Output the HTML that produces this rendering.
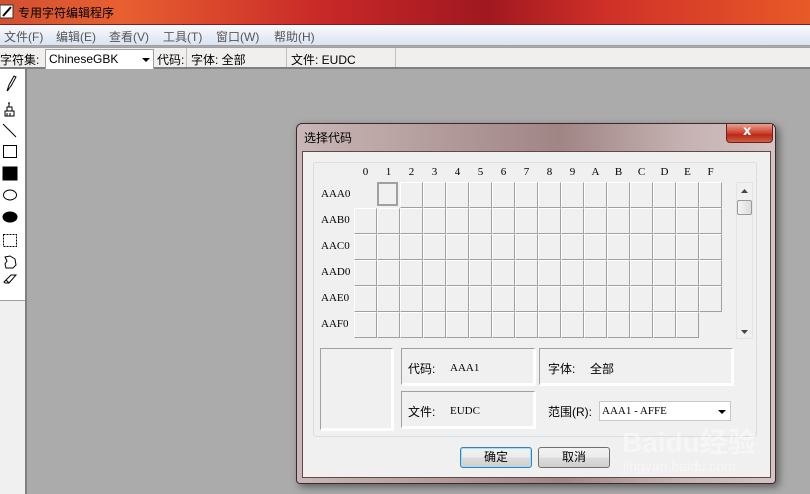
<!DOCTYPE html>
<html><head><meta charset="utf-8"><style>
*{margin:0;padding:0;box-sizing:border-box}
body{width:810px;height:494px;overflow:hidden;position:relative;background:#ababab;font-family:"Liberation Sans","Noto Sans CJK SC",sans-serif;font-size:12px;color:#000}
.a{position:absolute}
#title{left:0;top:0;width:810px;height:25px;background:linear-gradient(90deg,#d05030 0%,#e86030 15%,#c82828 40%,#a01820 60%,#d03028 75%,#e85a28 100%);border-bottom:1px solid #7a2020}
#menu{left:0;top:25px;width:810px;height:21px;background:linear-gradient(#f8fafd,#dbe3f2);border-bottom:1px solid #a0a0a0;color:#555;font-size:12px}
#menu span{position:absolute;top:3px}
#tb{left:0;top:47px;width:810px;height:22px;background:#f1efee;border-top:1px solid #a0a0a0;border-bottom:2px solid #808080}
#tb span{position:absolute;top:3px;font-size:12px}
#tool{left:0;top:69px;width:27px;height:425px;background:#f0f0f0;border-right:2px solid #808080}
.g{display:grid;grid-template-columns:repeat(16,23px);grid-auto-rows:26px}
.g i{display:block;width:23px;height:26px;background:#f0f0f0;border:1px solid;border-color:#fff #a0a0a0 #a0a0a0 #fff}
.g i.n{visibility:hidden}
.g i.s{border:2px solid #a0a0a0;background:#f0f0f0;margin:0 1px 2px 0;width:21px;height:24px}
.mono{font-family:"Liberation Serif","Noto Serif CJK SC",serif;font-size:11px}
.box{border:1px solid #a0a0a0;border-right-color:#fff;border-bottom-color:#fff;box-shadow:inset -1px -1px 0 #fff,1px 1px 0 #fff}
.btn{border:1px solid #707070;border-radius:3px;background:linear-gradient(#f2f2f2,#ebebeb 50%,#dddddd 51%,#cfcfcf);text-align:center;line-height:18px;font-size:12px}
</style></head><body>
<div id="title" class="a">
 <svg class="a" style="left:0;top:4px" width="14" height="16"><rect x="0" y="1" width="13" height="13" fill="#fff" stroke="#333"/><path d="M3 12L11 3" stroke="#000" stroke-width="2"/></svg>
 <span class="a" style="left:18px;top:4px;font-size:12px;color:#000">专用字符编辑程序</span>
</div>
<div id="menu" class="a">
 <span style="left:4px">文件(F)</span><span style="left:56px">编辑(E)</span><span style="left:109px">查看(V)</span><span style="left:163px">工具(T)</span><span style="left:216px">窗口(W)</span><span style="left:274px">帮助(H)</span>
</div>
<div id="tb" class="a">
 <span style="left:0">字符集:</span>
 <div class="a" style="left:45px;top:1px;width:109px;height:20px;background:#fff;border:1px solid #a0a0a0;border-bottom:none"><span style="left:3px;top:2px">ChineseGBK</span><svg class="a" style="left:96px;top:8px" width="8" height="5"><path d="M0 0h8L4 4z"/></svg></div>
 <span style="left:157px">代码:</span>
 <div class="a" style="left:186px;top:0;width:1px;height:19px;background:#c0c0c0"></div>
 <span style="left:191px">字体: 全部</span>
 <div class="a" style="left:286px;top:0;width:1px;height:19px;background:#c0c0c0"></div>
 <span style="left:291px">文件: EUDC</span>
 <div class="a" style="left:395px;top:0;width:1px;height:19px;background:#c0c0c0"></div>
</div>
<div id="tool" class="a">
 <div class="a" style="left:0;top:0;width:25px;height:232px;background:#fff;border-bottom:1px solid #a0a0a0"></div>
 <svg class="a" style="left:0;top:0" width="25" height="230" fill="none" stroke="#000">
  <path d="M7 22l2-6 5-9 2 1-5 9zM7 22l2-2"/>
  <path d="M9 34v4M8 34h2M7 38h5v4H7zM5 42h9v5H5z M7 44v3M10 44v3"/>
  <path d="M3 55l13 13"/>
  <rect x="3.5" y="76.5" width="13" height="12"/>
  <rect x="3" y="98" width="14" height="13" fill="#000"/>
  <ellipse cx="10" cy="126" rx="6.5" ry="5"/>
  <ellipse cx="10" cy="148" rx="7" ry="5" fill="#000"/>
  <rect x="3.5" y="165.5" width="13" height="12" stroke-dasharray="2 1"/>
  <path d="M5 188l5-1 5 3 1 6-3 3H6l-1-4 2-3z"/>
  <path d="M4 213l7-7 5 0-7 8H5zM9 214l-3-3"/>
 </svg>
</div>
<!-- dialog -->
<div class="a" style="left:296px;top:123px;width:480px;height:361px;border-radius:6px 6px 4px 4px;background:linear-gradient(90deg,#c9b6b6,#b39b9b 30%,#a08585 55%,#c4b0b0 80%,#d4c4c4);border:1px solid #3a2a2a;box-shadow:3px 3px 8px rgba(0,0,0,.45)">
 <span class="a" style="left:7px;top:5px;font-size:12px">选择代码</span>
 <div class="a" style="left:429px;top:0;width:47px;height:19px;border:1px solid #6a2020;border-top:none;border-radius:0 0 4px 4px;background:linear-gradient(#e8a090,#d04030 50%,#b82818 60%,#d06040)"><span class="a" style="left:16px;top:0;color:#fff;font-weight:bold;font-size:13px;font-family:'DejaVu Sans',sans-serif">x</span></div>
 <div class="a" style="left:5px;top:27px;width:469px;height:327px;background:#f0f0f0;border:1px solid #5a4a4a"></div>
</div>
<div class="a" style="left:313px;top:162px;width:444px;height:275px;border:1px solid #d5dfe5;border-radius:3px"></div>
<div class="a mono" style="left:354px;top:166px;width:368px;display:grid;grid-template-columns:repeat(16,23px);text-align:center">
<span>0</span><span>1</span><span>2</span><span>3</span><span>4</span><span>5</span><span>6</span><span>7</span><span>8</span><span>9</span><span>A</span><span>B</span><span>C</span><span>D</span><span>E</span><span>F</span></div>
<div class="a mono" style="left:321px;top:181px;line-height:26px">AAA0<br>AAB0<br>AAC0<br>AAD0<br>AAE0<br>AAF0</div>
<div class="a g" style="left:354px;top:182px">
<i class="n"></i><i class="s"></i><i></i><i></i><i></i><i></i><i></i><i></i><i></i><i></i><i></i><i></i><i></i><i></i><i></i><i></i>
<i></i><i></i><i></i><i></i><i></i><i></i><i></i><i></i><i></i><i></i><i></i><i></i><i></i><i></i><i></i><i></i>
<i></i><i></i><i></i><i></i><i></i><i></i><i></i><i></i><i></i><i></i><i></i><i></i><i></i><i></i><i></i><i></i>
<i></i><i></i><i></i><i></i><i></i><i></i><i></i><i></i><i></i><i></i><i></i><i></i><i></i><i></i><i></i><i></i>
<i></i><i></i><i></i><i></i><i></i><i></i><i></i><i></i><i></i><i></i><i></i><i></i><i></i><i></i><i></i><i></i>
<i></i><i></i><i></i><i></i><i></i><i></i><i></i><i></i><i></i><i></i><i></i><i></i><i></i><i></i><i></i><i class="n"></i>
</div>
<div class="a" style="left:736px;top:182px;width:17px;height:157px;background:#f0f0f0;border:1px solid #e4e4e4">
 <svg class="a" style="left:4px;top:6px" width="7" height="4"><path d="M0 4L3.5 0 7 4z" fill="#444"/></svg>
 <div class="a" style="left:0;top:17px;width:15px;height:15px;border:1px solid #999;border-radius:2px;background:linear-gradient(90deg,#f4f4f4,#dcdcdc)"></div>
 <svg class="a" style="left:4px;top:147px" width="7" height="4"><path d="M0 0h7L3.5 4z" fill="#444"/></svg>
</div>
<div class="a box" style="left:320px;top:348px;width:73px;height:82px"></div>
<div class="a box" style="left:401px;top:348px;width:134px;height:37px"><span class="a" style="left:6px;top:11px">代码:</span><span class="a mono" style="left:48px;top:13px">AAA1</span></div>
<div class="a box" style="left:539px;top:348px;width:194px;height:37px"><span class="a" style="left:8px;top:11px">字体:</span><span class="a" style="left:50px;top:11px">全部</span></div>
<div class="a box" style="left:401px;top:391px;width:134px;height:37px"><span class="a" style="left:6px;top:11px">文件:</span><span class="a mono" style="left:48px;top:13px">EUDC</span></div>
<span class="a" style="left:548px;top:403px">范围(R):</span>
<div class="a" style="left:599px;top:401px;width:132px;height:20px;background:#fff;border:1px solid #c8c8c8"><span class="a mono" style="left:2px;top:3px">AAA1 - AFFE</span><svg class="a" style="left:118px;top:8px" width="8" height="5"><path d="M0 0h8L4 4z"/></svg></div>
<div class="a btn" style="left:460px;top:447px;width:72px;height:21px;border-color:#3c7fb1;box-shadow:inset 0 0 0 1px #9fe0f8">确定</div>
<div class="a btn" style="left:538px;top:447px;width:72px;height:21px">取消</div>
<span class="a" style="left:622px;top:421px;font-size:28px;font-weight:bold;color:rgba(255,255,255,.4)">Baidu经验</span>
<span class="a" style="left:623px;top:458px;font-size:14px;color:rgba(255,255,255,.45)">jingyan.baidu.com</span>
</body></html>
